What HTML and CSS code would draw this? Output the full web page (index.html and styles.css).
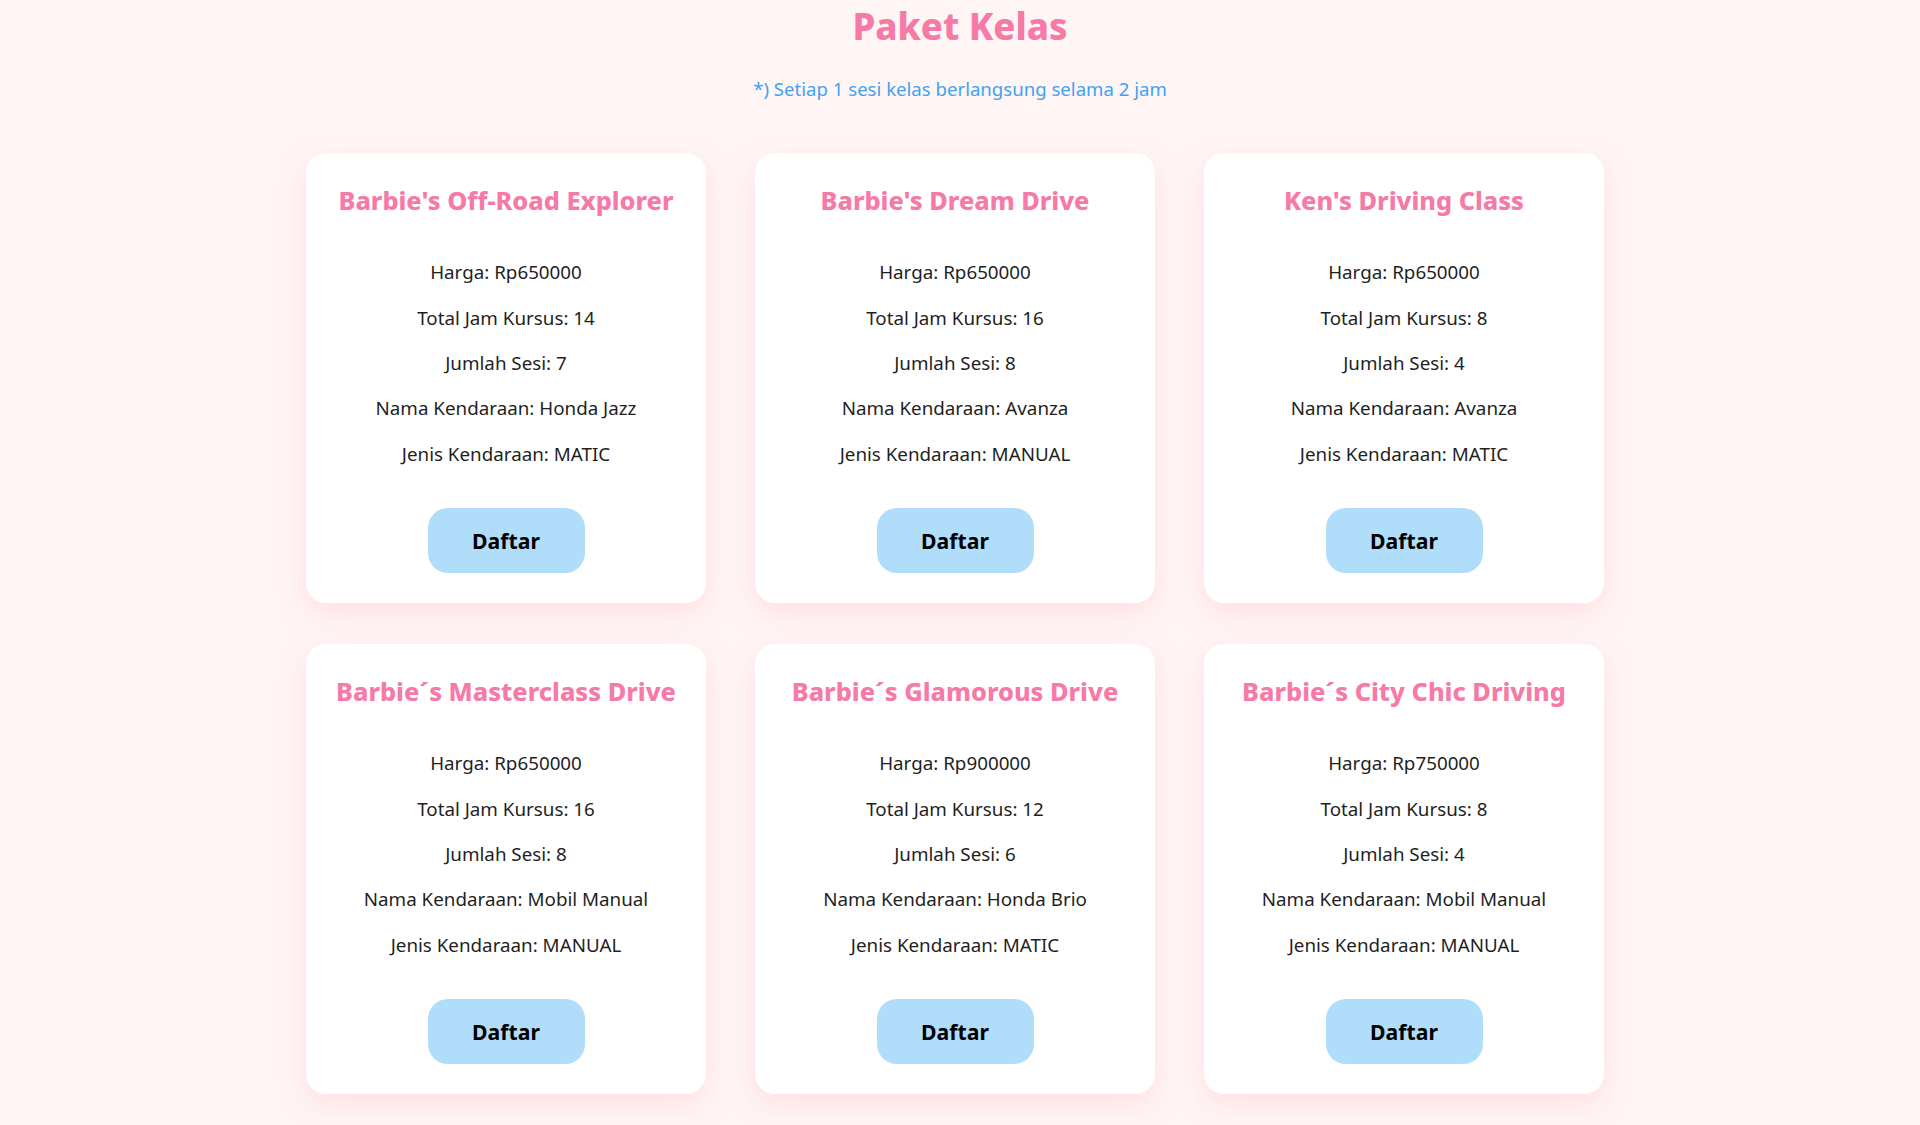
FILE: index.html
```html
<!DOCTYPE html>
<html lang="id">
<head>
<meta charset="utf-8">
<title>Paket Kelas</title>
<link rel="stylesheet" href="styles.css">
</head>
<body>
<header class="page-head">
  <h1 class="page-title">Paket Kelas</h1>
  <p class="page-note">*) Setiap 1 sesi kelas berlangsung selama 2 jam</p>
</header>
<main class="grid">
  <section class="card">
    <h2 class="card-title">Barbie's Off-Road Explorer</h2>
    <div class="card-info">
      <p>Harga: Rp650000</p>
      <p>Total Jam Kursus: 14</p>
      <p>Jumlah Sesi: 7</p>
      <p>Nama Kendaraan: Honda Jazz</p>
      <p>Jenis Kendaraan: MATIC</p>
    </div>
    <button class="btn">Daftar</button>
  </section>
  <section class="card">
    <h2 class="card-title">Barbie's Dream Drive</h2>
    <div class="card-info">
      <p>Harga: Rp650000</p>
      <p>Total Jam Kursus: 16</p>
      <p>Jumlah Sesi: 8</p>
      <p>Nama Kendaraan: Avanza</p>
      <p>Jenis Kendaraan: MANUAL</p>
    </div>
    <button class="btn">Daftar</button>
  </section>
  <section class="card">
    <h2 class="card-title">Ken's Driving Class</h2>
    <div class="card-info">
      <p>Harga: Rp650000</p>
      <p>Total Jam Kursus: 8</p>
      <p>Jumlah Sesi: 4</p>
      <p>Nama Kendaraan: Avanza</p>
      <p>Jenis Kendaraan: MATIC</p>
    </div>
    <button class="btn">Daftar</button>
  </section>
  <section class="card">
    <h2 class="card-title">Barbie´s Masterclass Drive</h2>
    <div class="card-info">
      <p>Harga: Rp650000</p>
      <p>Total Jam Kursus: 16</p>
      <p>Jumlah Sesi: 8</p>
      <p>Nama Kendaraan: Mobil Manual</p>
      <p>Jenis Kendaraan: MANUAL</p>
    </div>
    <button class="btn">Daftar</button>
  </section>
  <section class="card">
    <h2 class="card-title">Barbie´s Glamorous Drive</h2>
    <div class="card-info">
      <p>Harga: Rp900000</p>
      <p>Total Jam Kursus: 12</p>
      <p>Jumlah Sesi: 6</p>
      <p>Nama Kendaraan: Honda Brio</p>
      <p>Jenis Kendaraan: MATIC</p>
    </div>
    <button class="btn">Daftar</button>
  </section>
  <section class="card">
    <h2 class="card-title">Barbie´s City Chic Driving</h2>
    <div class="card-info">
      <p>Harga: Rp750000</p>
      <p>Total Jam Kursus: 8</p>
      <p>Jumlah Sesi: 4</p>
      <p>Nama Kendaraan: Mobil Manual</p>
      <p>Jenis Kendaraan: MANUAL</p>
    </div>
    <button class="btn">Daftar</button>
  </section>
</main>
</body>
</html>
```
FILE: styles.css
```css
* { box-sizing: border-box; }

html, body {
  margin: 0;
  padding: 0;
}

body {
  background: #fff5f5;
  font-family: "Noto Sans", "Open Sans", sans-serif;
  color: #1f1f1f;
  min-height: 1125px;
}

.page-head {
  text-align: center;
  padding-top: 5px;
}

.page-title {
  margin: 0;
  font-size: 36.5px;
  line-height: 1.2;
  font-weight: 800;
  color: #f67aa8;
}

.page-note {
  margin: 28px 0 0;
  font-size: 18.6px;
  line-height: 1.3;
  color: #3fa2f2;
}

.grid {
  display: grid;
  grid-template-columns: repeat(3, 400px);
  column-gap: 49px;
  row-gap: 41px;
  justify-content: center;
  padding: 52px 10px 40px 0;
}

.card {
  background: #ffffff;
  border-radius: 20px;
  box-shadow: 0 10px 28px rgba(255, 182, 193, 0.35);
  padding: 32px 20px 30px;
  display: flex;
  flex-direction: column;
  align-items: center;
  text-align: center;
  height: 450px;
}

.card-title {
  margin: 0;
  font-size: 25.3px;
  line-height: 1.2;
  font-weight: 800;
  color: #f67aa8;
  white-space: nowrap;
}

.card-info {
  margin-top: 45px;
  display: flex;
  flex-direction: column;
  gap: 20.3px;
}

.card-info p {
  margin: 0;
  font-size: 18.8px;
  line-height: 25px;
}

.btn {
  margin-top: 41px;
  width: 157px;
  height: 66px;
  border: none;
  border-radius: 20px;
  background: #b0ddf9;
  color: #000;
  font-family: inherit;
  font-size: 21.2px;
  font-weight: 700;
  cursor: pointer;
}
```
